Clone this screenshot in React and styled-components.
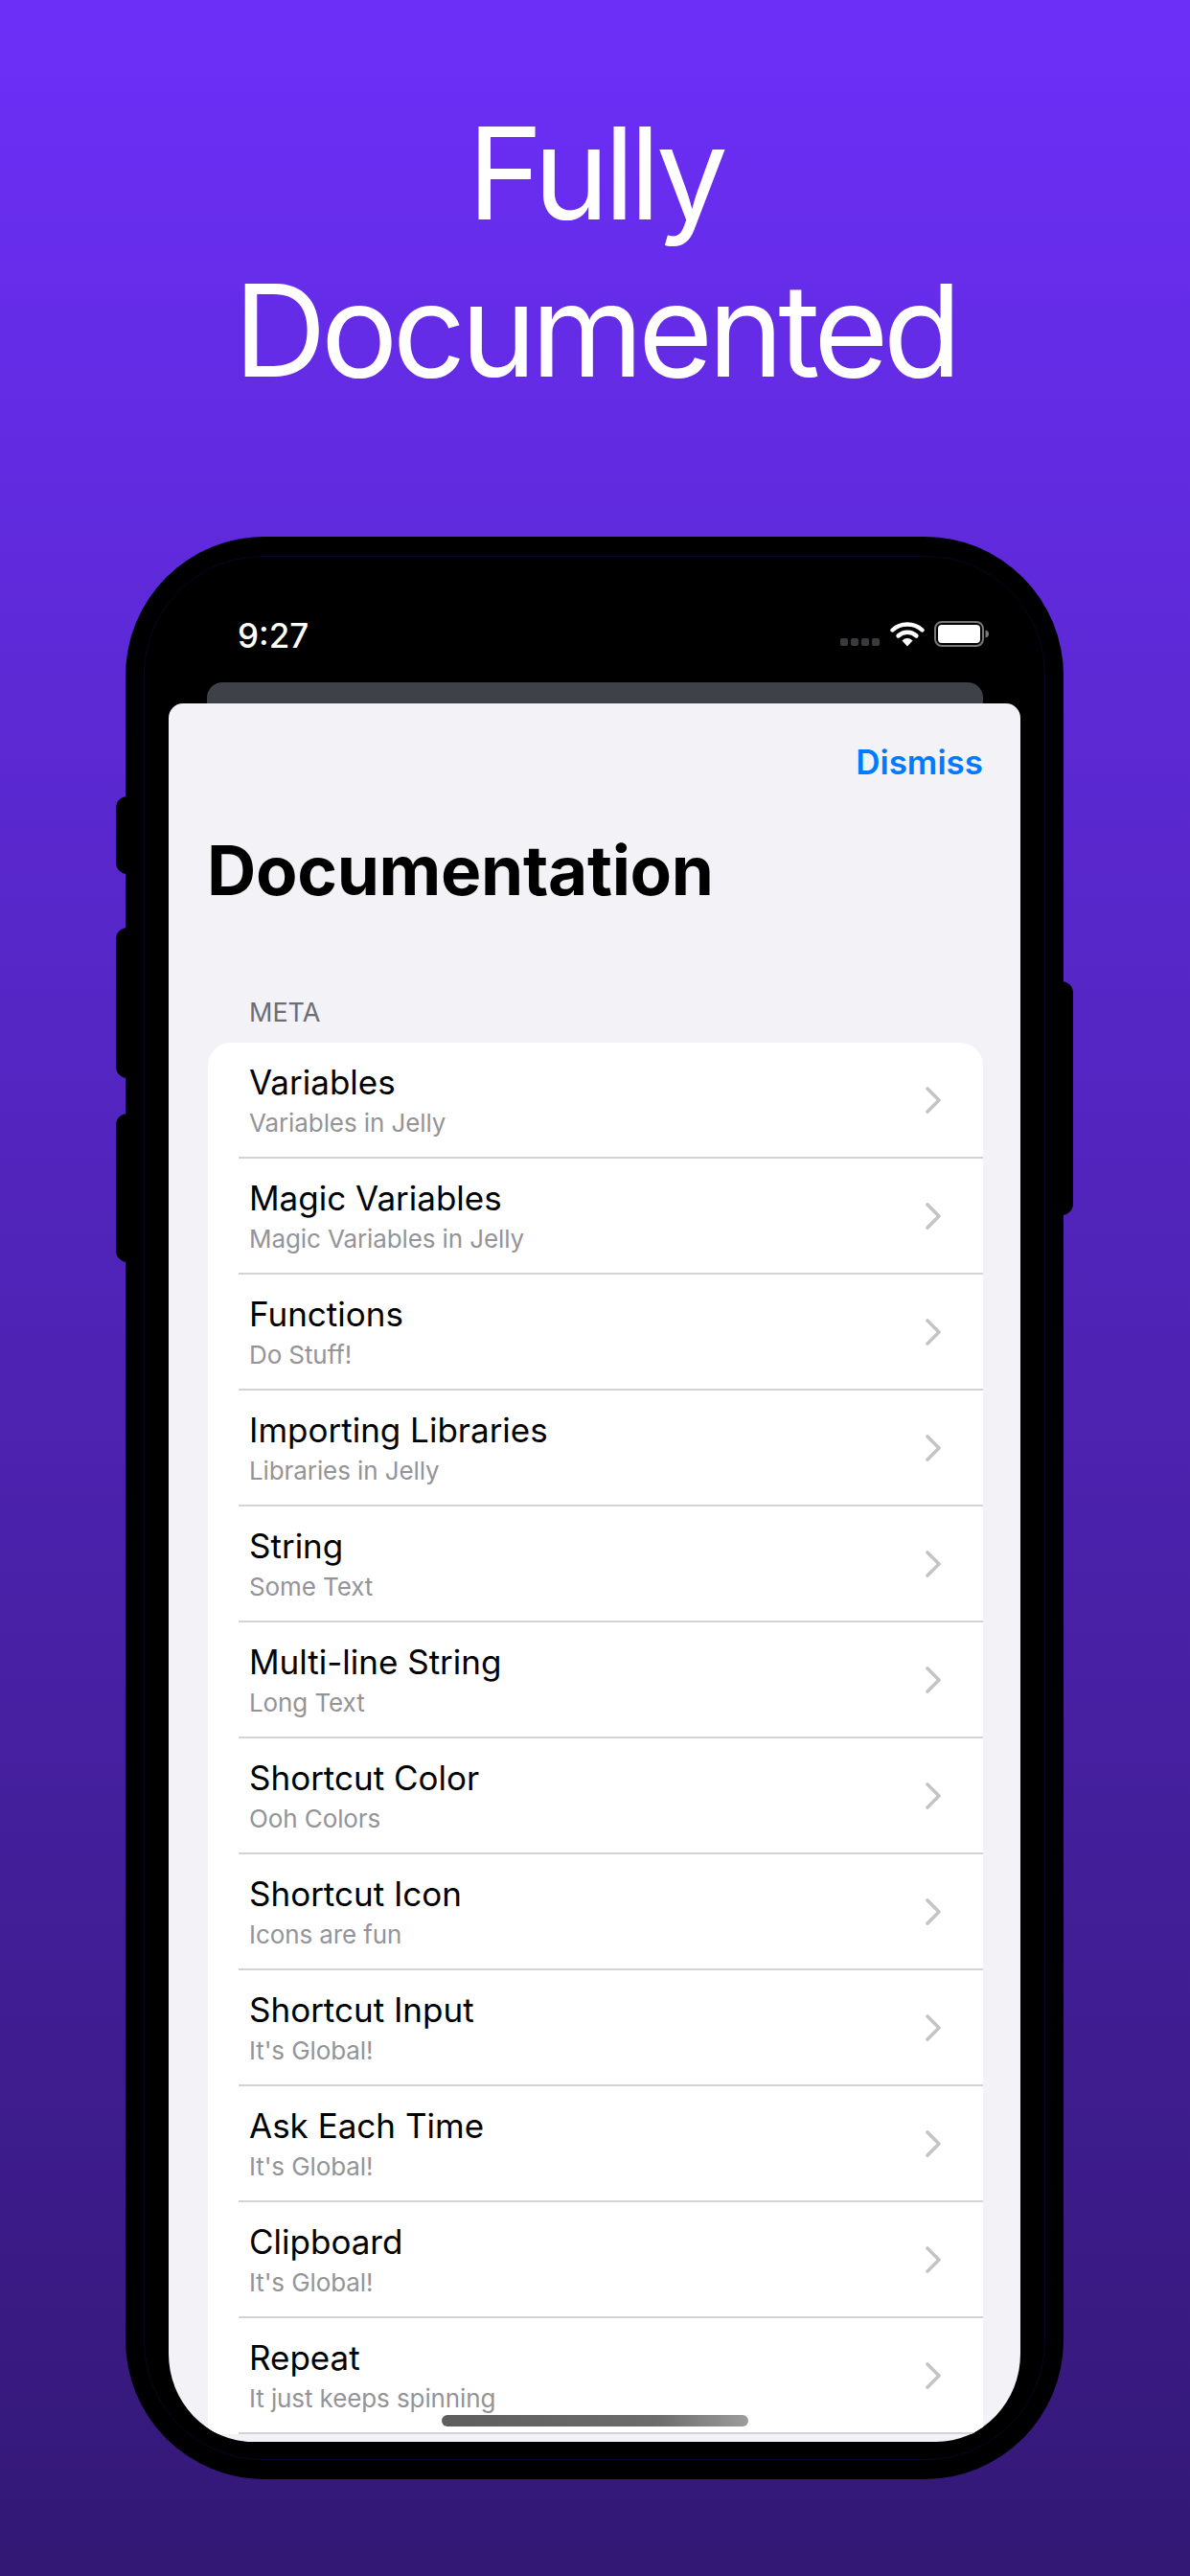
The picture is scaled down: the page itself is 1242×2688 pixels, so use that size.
import React from "react"
import styled, { createGlobalStyle } from "styled-components"

const GlobalStyle = createGlobalStyle`
  html, body {
    margin: 0;
    padding: 0;
    background: #351977;
  }
  * {
    box-sizing: border-box;
  }
`

const Page = styled.div`
  width: 1242px;
  height: 2688px;
  overflow: hidden;
  background: linear-gradient(180deg, #6c2ff8 0%, #331875 100%);
  font-family: Inter, "Liberation Sans", sans-serif;
`

const Headline = styled.h1`
  margin: 0;
  height: 560px;
  padding-top: 98px;
  font-size: 134px;
  line-height: 164px;
  font-weight: 400;
  letter-spacing: -5.6px;
  text-align: center;
  color: #fff;
`

const Phone = styled.div`
  position: relative;
  width: 979px;
  height: 2027px;
  margin-left: 131px;
  padding: 0 45px;
  background: #000;
  border-radius: 145px;

  &::after {
    content: "";
    position: absolute;
    inset: 20px 19px;
    border: 1px solid #0a0524;
    border-radius: 124px;
    pointer-events: none;
  }
`

const SideButton = styled.div`
  position: absolute;
  top: ${(props) => props.top}px;
  height: ${(props) => props.height}px;
  width: 12px;
  background: #000;
  ${(props) =>
    props.right
      ? "right: -10px; border-radius: 0 12px 12px 0;"
      : "left: -10px; border-radius: 12px 0 0 12px;"}
`

const StatusBar = styled.div`
  position: relative;
  z-index: 1;
  height: 152px;
  padding: 86px 32px 0 72px;
  display: flex;
  justify-content: space-between;
  align-items: flex-start;
`

const Clock = styled.span`
  font-size: 35px;
  line-height: 34px;
  font-weight: 500;
  color: #fff;
`

const StatusIcons = styled.div`
  display: flex;
  align-items: flex-end;
  gap: 10px;
  margin-top: 2px;
`

const SignalDots = styled.div`
  display: flex;
  gap: 3px;
  margin-bottom: 1px;
  margin-right: 1px;
`

const SignalDot = styled.i`
  width: 8px;
  height: 8px;
  border-radius: 2px;
  background: #3a3a3c;
`

const BackSheet = styled.div`
  height: 22px;
  margin: 0 39px 0 40px;
  background: #3f4148;
  border-radius: 16px 16px 0 0;
`

const Sheet = styled.div`
  position: relative;
  z-index: 1;
  height: 1814px;
  overflow: hidden;
  background: #f2f2f7;
  border-radius: 15px 15px 88px 88px / 15px 15px 92px 92px;
`

const SheetBar = styled.div`
  display: flex;
  justify-content: flex-end;
  padding: 39px 39px 0 0;
`

const Dismiss = styled.span`
  font-size: 35px;
  line-height: 44px;
  font-weight: 600;
  color: #007aff;
`

const SheetTitle = styled.h2`
  margin: 49px 0 0 40px;
  font-size: 71px;
  line-height: 84px;
  font-weight: 700;
  letter-spacing: -0.3px;
  color: #000;
`

const SectionLabel = styled.div`
  margin: 90px 0 0 84px;
  font-size: 27px;
  line-height: 34px;
  color: #6d6d72;
`

const List = styled.div`
  margin: 14px 39px 0 41px;
  background: #fff;
  border-radius: 24px 24px 0 0;
`

const Row = styled.div`
  height: 121px;
  display: flex;
  align-items: center;
  justify-content: space-between;
  margin-left: 32px;
  padding: 0 43px 0 11px;
  border-bottom: 2px solid #d3d3d6;
`

const RowText = styled.div`
  display: flex;
  flex-direction: column;
`

const RowTitle = styled.span`
  font-size: 35px;
  line-height: 44px;
  color: #000;
`

const RowSubtitle = styled.span`
  margin-top: 5px;
  font-size: 26px;
  line-height: 32px;
  letter-spacing: -0.1px;
  color: #949498;
`

const HomeBar = styled.div`
  position: absolute;
  left: 285px;
  bottom: 16px;
  width: 320px;
  height: 12px;
  border-radius: 6px;
  background: linear-gradient(90deg, #5e5e5e 0%, #6c6c6c 70%, #9c9c9c 100%);
`

const rows = [
  ["Variables", "Variables in Jelly"],
  ["Magic Variables", "Magic Variables in Jelly"],
  ["Functions", "Do Stuff!"],
  ["Importing Libraries", "Libraries in Jelly"],
  ["String", "Some Text"],
  ["Multi-line String", "Long Text"],
  ["Shortcut Color", "Ooh Colors"],
  ["Shortcut Icon", "Icons are fun"],
  ["Shortcut Input", "It's Global!"],
  ["Ask Each Time", "It's Global!"],
  ["Clipboard", "It's Global!"],
  ["Repeat", "It just keeps spinning"],
]

function Chevron() {
  return (
    <svg width="18" height="28" viewBox="0 0 18 28" fill="none">
      <path
        d="M3 2l12 12L3 26"
        stroke="#c4c4c7"
        strokeWidth="3.6"
        strokeLinecap="round"
        strokeLinejoin="round"
      />
    </svg>
  )
}

function WifiIcon() {
  return (
    <svg width="36" height="27" viewBox="0 0 36 27" fill="none">
      <path d="M2.5 9.5C11 1.5 25 1.5 33.5 9.5" stroke="#fff" strokeWidth="4.4" strokeLinecap="round" />
      <path d="M8.5 15.5C14 10.5 22 10.5 27.5 15.5" stroke="#fff" strokeWidth="4.4" strokeLinecap="round" />
      <path d="M12.5 20.5C15.8 17.2 20.2 17.2 23.5 20.5L18 26.5Z" fill="#fff" />
    </svg>
  )
}

function BatteryIcon() {
  return (
    <svg width="58" height="27" viewBox="0 0 58 27" fill="none">
      <rect x="1" y="1" width="50" height="25" rx="7" stroke="#77777a" strokeWidth="2" />
      <rect x="4" y="4" width="44" height="19" rx="4" fill="#fff" />
      <path d="M53.5 9.5c2.5.6 3.5 2 3.5 4s-1 3.4-3.5 4z" fill="#77777a" />
    </svg>
  )
}

export default function App() {
  return (
    <Page>
      <GlobalStyle />
      <Headline>
        Fully
        <br />
        Documented
      </Headline>
      <Phone>
        <SideButton top={271} height={81} />
        <SideButton top={408} height={157} />
        <SideButton top={602} height={155} />
        <SideButton right top={464} height={244} />
        <StatusBar>
          <Clock>9:27</Clock>
          <StatusIcons>
            <SignalDots>
              <SignalDot />
              <SignalDot />
              <SignalDot />
              <SignalDot />
            </SignalDots>
            <WifiIcon />
            <BatteryIcon />
          </StatusIcons>
        </StatusBar>
        <BackSheet />
        <Sheet>
          <SheetBar>
            <Dismiss>Dismiss</Dismiss>
          </SheetBar>
          <SheetTitle>Documentation</SheetTitle>
          <SectionLabel>META</SectionLabel>
          <List>
            {rows.map(([title, subtitle]) => (
              <Row key={title}>
                <RowText>
                  <RowTitle>{title}</RowTitle>
                  <RowSubtitle>{subtitle}</RowSubtitle>
                </RowText>
                <Chevron />
              </Row>
            ))}
          </List>
          <HomeBar />
        </Sheet>
      </Phone>
    </Page>
  )
}
